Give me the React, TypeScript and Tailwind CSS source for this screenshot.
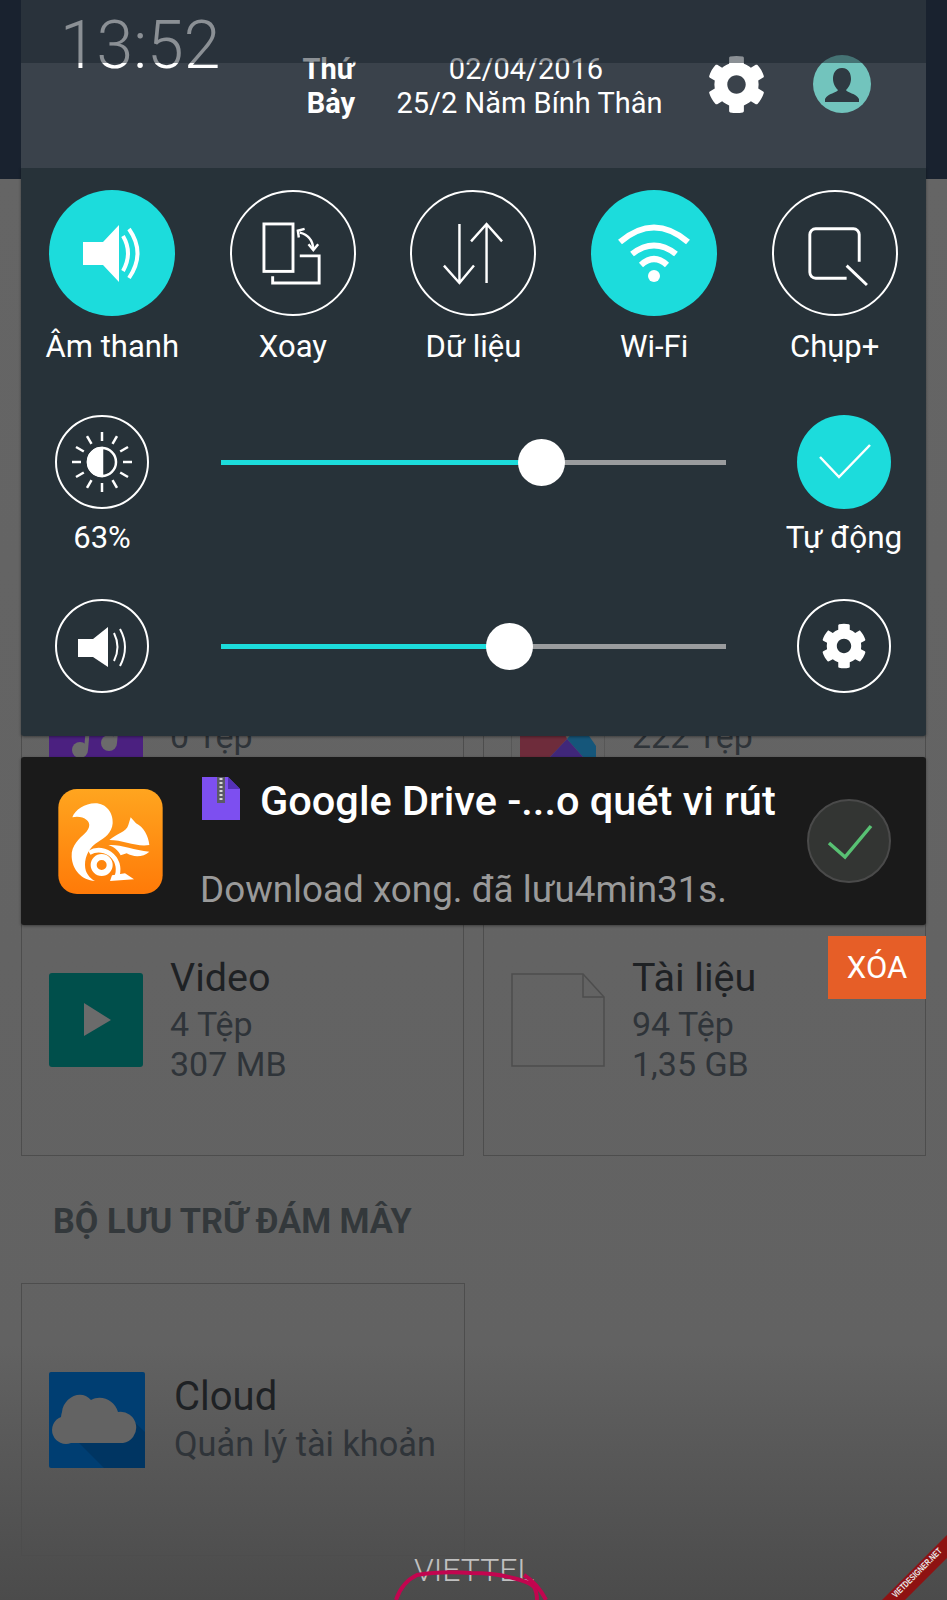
import { FaCog } from "react-icons/fa";

const font = { fontFamily: "Roboto, sans-serif" };

const Speaker = () => (
  <svg viewBox="0 0 126 126" className="w-[126px] h-[126px]" fill="none">
    <polygon points="34,52 54,52 70,35 70,92 54,75 34,75" fill="#fff" />
    <path d="M74 46 Q84 63 74 81" stroke="#fff" strokeWidth="4" />
    <path d="M80 39 Q97 63 80 88" stroke="#fff" strokeWidth="4" />
  </svg>
);

const Rotate = () => (
  <svg viewBox="0 0 126 126" className="w-[122px] h-[122px]" fill="none" stroke="#fff" strokeWidth="3">
    <rect x="33" y="33" width="30" height="49" />
    <path d="M70 66 H90 V94 H42 V87" />
    <path d="M70 42 Q83 45 84 59" strokeWidth="2.5" />
    <path d="M69 47 L68 40 L75 38 M79 54 L84 60 L89 54" strokeWidth="2.5" />
  </svg>
);

const DataArrows = () => (
  <svg viewBox="0 0 126 126" className="w-[122px] h-[122px]" fill="none" stroke="#fff" strokeWidth="2.5">
    <path d="M49 33 V94 M33 76 L49 94 L64 76" />
    <path d="M77 94 V33 M61 51 L77 33 L93 51" />
  </svg>
);

const Wifi = () => (
  <svg viewBox="0 0 126 126" className="w-[126px] h-[126px]" fill="none" stroke="#fff" strokeWidth="6">
    <path d="M29 52 Q63 23 97 52" />
    <path d="M41 64 Q63 47 85 64" />
    <path d="M50 75 Q63 63 76 75" />
    <ellipse cx="63" cy="86" rx="6" ry="6" fill="#fff" stroke="none" />
  </svg>
);

const Capture = () => (
  <svg viewBox="0 0 126 126" className="w-[122px] h-[122px]" fill="none" stroke="#fff" strokeWidth="3">
    <path d="M75 89 H43 a6 6 0 0 1 -6 -6 V44 a6 6 0 0 1 6 -6 H82 a6 6 0 0 1 6 6 V72" />
    <path d="M75 76 L96 96" />
  </svg>
);

const Brightness = () => {
  const rays = [0, 30, 60, 90, 120, 150, 180, 210, 240, 270, 300, 330];
  return (
    <svg viewBox="0 0 94 94" className="w-[94px] h-[94px] shrink-0" fill="none" stroke="#fff" strokeWidth="2.5">
      {rays.map((r) => (
        <line key={r} x1="47" y1="17" x2="47" y2="26" transform={`rotate(${r} 47 47)`} />
      ))}
      <circle cx="47" cy="47" r="14" />
      <path d="M47 33 A14 14 0 0 0 47 61 Z" fill="#fff" />
    </svg>
  );
};

const VolumeIcon = () => (
  <svg viewBox="0 0 94 94" className="w-[94px] h-[94px] shrink-0" fill="none" stroke="#fff" strokeWidth="2">
    <polygon points="23,40 38,40 53,28 53,68 38,58 23,58" fill="#fff" stroke="none" />
    <path d="M59 34 Q66 48 59 62" />
    <path d="M65 30 Q75 48 65 67" />
  </svg>
);

const Check = () => (
  <svg viewBox="0 0 94 94" className="w-[94px] h-[94px]" fill="none" stroke="#fff" strokeWidth="2.5">
    <path d="M23 42 L42 62 L73 30" />
  </svg>
);

const UcLogo = () => (
  <svg viewBox="85 57 313 315" className="w-[105px] h-[105px]">
    <defs>
      <linearGradient id="uc" x1="0" y1="0" x2="0" y2="1">
        <stop offset="0" stopColor="#ffa51f" />
        <stop offset="1" stopColor="#ff7a08" />
      </linearGradient>
    </defs>
    <rect x="85" y="57" width="313" height="315" rx="56" fill="url(#uc)" />
    <path
      d="M127 142 C135 120 165 100 195 100 C230 100 250 130 248 160 C246 190 222 205 205 215 C180 230 165 255 165 285 C165 310 180 325 195 333 C155 330 127 300 125 260 C123 225 150 205 165 190 C180 175 182 160 170 150 C160 142 145 138 127 142 Z"
      fill="#fff"
    />
    <circle cx="215" cy="285" r="24" fill="none" stroke="#fff" strokeWidth="18" />
    <path d="M178 248 A58 58 0 0 1 258 325" fill="none" stroke="#fff" strokeWidth="14" />
    <path d="M246 316 L285 310 L312 328 L240 333 Z" fill="#fff" />
    <path d="M238 210 C262 190 290 185 295 165 L302 142 L318 160 C342 172 355 198 358 225 C320 232 280 210 238 210 Z" fill="#fff" />
    <path d="M235 225 C270 222 310 240 358 245 C340 262 310 262 290 250 L272 256 C265 240 250 230 235 225 Z" fill="#fff" />
  </svg>
);

const ZipIcon = () => (
  <svg viewBox="0 0 38 43" className="w-[38px] h-[43px] shrink-0">
    <path d="M0 0 H26 L38 12 V43 H0 Z" fill="#7d4ff0" />
    <path d="M26 0 L38 12 H26 Z" fill="#5531b8" />
    <rect x="15" y="0" width="8" height="26" fill="#5b5a66" />
    <path d="M19 1 V24" stroke="#d8d8d8" strokeWidth="3" strokeDasharray="2 2" />
  </svg>
);

const Toggle = ({ label, active, children }: { label: string; active?: boolean; children: React.ReactNode }) => (
  <div className="flex flex-col items-center">
    <div
      className={
        active
          ? "w-[126px] h-[126px] rounded-full bg-[#1cdcdc] flex items-center justify-center"
          : "w-[126px] h-[126px] rounded-full border-2 border-white flex items-center justify-center"
      }
    >
      {children}
    </div>
    <p className="mt-[13px] text-[31px] leading-[36px] text-white">{label}</p>
  </div>
);

const Slider = ({ fill }: { fill: string }) => (
  <div className="relative h-[94px] ml-[38px] mr-[36px] flex items-center">
    <div className="w-full h-[5px] bg-[#9a9c9e] flex">
      <div className={`${fill} h-full bg-[#1cdcdc]`} />
    </div>
  </div>
);

const Thumb = ({ left }: { left: string }) => (
  <div className={`absolute top-[24px] ${left} w-[47px] h-[47px] rounded-full bg-white`} />
);

const FileCard = ({ icon, title, line1, line2 }: { icon: React.ReactNode; title?: string; line1: string; line2?: string }) => (
  <div className="h-[273px] border border-[#4d4d4d] flex items-center pl-[27px]">
    <div className="w-[94px] shrink-0 self-center">{icon}</div>
    <div className="ml-[27px]">
      <p className="h-[44px] mb-[4px] text-[39.5px] leading-[44px] text-[#1e2124]">{title}</p>
      <p className="h-[40px] text-[34px] leading-[40px] text-[#2f3439]">{line1}</p>
      <p className="h-[40px] text-[34px] leading-[40px] text-[#2f3439]">{line2}</p>
    </div>
  </div>
);

export default function App() {
  return (
    <div className="relative w-[947px] h-[1600px] overflow-hidden bg-[#656565]" style={font}>
      {/* page behind the notification shade */}
      <div className="h-[179px] bg-[#19222f]" />
      <div className="h-[1421px] bg-gradient-to-b from-[#656565] via-[#626262] via-[82%] to-[#4b4b4b] px-[21px] pt-[416px]">
        <div className="grid grid-cols-2 gap-x-[19px] gap-y-[15px]">
          <FileCard
            line1="0 Tệp"
            icon={
              <svg viewBox="0 0 94 94" className="w-[94px] h-[94px]">
                <rect width="94" height="94" rx="2" fill="#4b2080" />
                <circle cx="31" cy="65" r="8" fill="#6b6b6b" />
                <circle cx="60" cy="58" r="8" fill="#6b6b6b" />
                <path d="M37 65 L39 42 M66 58 L68 35" stroke="#6b6b6b" strokeWidth="4" />
              </svg>
            }
          />
          <FileCard
            line1="222 Tệp"
            icon={
              <svg viewBox="0 0 94 94" className="w-[94px] h-[94px]">
                <rect x="0.5" y="0.5" width="93" height="93" fill="none" stroke="#575757" />
                <polygon points="9,40 50,40 56,54 39,72 9,72" fill="#6e2c3b" />
                <polygon points="56,54 64,45 74,45 85,61 85,94 72,72" fill="#15567a" />
                <polygon points="56,54 72,72 39,72" fill="#40277a" />
              </svg>
            }
          />
          <FileCard
            title="Video"
            line1="4 Tệp"
            line2="307 MB"
            icon={
              <svg viewBox="0 0 94 94" className="w-[94px] h-[94px]">
                <rect width="94" height="94" rx="3" fill="#004f4b" />
                <polygon points="35,30 62,47 35,63" fill="#6b6b6b" />
              </svg>
            }
          />
          <FileCard
            title="Tài liệu"
            line1="94 Tệp"
            line2="1,35 GB"
            icon={
              <svg viewBox="0 0 94 94" className="w-[94px] h-[94px]" fill="none" stroke="#4d4d4d" strokeWidth="1.5">
                <path d="M1 1 H72 L93 24 V93 H1 Z" />
                <path d="M72 1 V24 H93" />
              </svg>
            }
          />
        </div>
        <h2 className="mt-[45px] ml-[32px] text-[34.2px] leading-[40px] font-bold text-[#33383b]">BỘ LƯU TRỮ ĐÁM MÂY</h2>
        <div className="mt-[42px] w-[444px] h-[273px] border border-[#4d4d4d] flex items-center pl-[27px]">
          <svg viewBox="0 0 96 96" className="w-[96px] h-[96px] shrink-0">
            <rect width="96" height="96" rx="2" fill="#003e72" />
            <path d="M30 71 L55 96 H96 V60 L80 45 Z" fill="#003562" />
            <path d="M22 71 A13 13 0 0 1 12 45 A18 18 0 0 1 13 40 C14 26 32 16 42 28 C52 22 66 28 69 40 A15 15 0 0 1 74 71 Z" fill="#636363" />
          </svg>
          <div className="ml-[29px] mt-[3px]">
            <p className="text-[40px] leading-[46px] text-[#1e2124]">Cloud</p>
            <p className="text-[34.3px] leading-[48px] text-[#2f3439]">Quản lý tài khoản</p>
          </div>
        </div>
      </div>

      <p className="absolute left-[414px] top-[1550px] text-[32px] leading-[40px] font-light text-[#c0c0c0]">VIETTEL</p>
      <svg viewBox="0 0 947 100" className="absolute left-0 top-[1500px] w-[947px] h-[100px]" fill="none" stroke="#c2054f" strokeWidth="4">
        <path d="M396 100 Q402 82 417 75 Q440 71 471 73 Q495 73 513 78 Q530 82 534 87 Q537 92 537 100" />
        <path d="M524 75 Q538 84 546 100" />
      </svg>

      {/* watermark ribbon */}
      <svg viewBox="847 1500 100 100" className="absolute right-0 bottom-0 w-[100px] h-[100px]">
        <polygon points="882,1600 947,1535 947,1558 905,1600" fill="#8e1212" />
        <text
          x="919"
          y="1575"
          transform="rotate(-45 919 1575)"
          textAnchor="middle"
          textLength="66"
          lengthAdjust="spacingAndGlyphs"
          fontSize="9"
          fontWeight="700"
          fill="#e8e8e8"
          fontFamily="Liberation Sans, sans-serif"
        >
          VIETDESIGNER.NET
        </text>
      </svg>

      {/* notification shade */}
      <div className="absolute left-[21px] top-0 w-[905px] flex flex-col">
        <div className="relative h-[168px] bg-[#3a424b] flex items-start">
          <p className="ml-[39px] mt-[11px] text-[66px] leading-[70px] font-light text-white w-[242px]">13:52</p>
          <div className="mt-[52px] text-[29px] leading-[34px] font-bold text-white w-[55px]">
            <p className="text-center -ml-[2px]">Thứ</p>
            <p className="text-center ml-[3px]">Bảy</p>
          </div>
          <div className="mt-[52px] ml-[39px] text-[29px] leading-[34px] text-white text-center w-[267px]">
            <p className="mr-[7px]">02/04/2016</p>
            <p>25/2 Năm Bính Thân</p>
          </div>
          <FaCog className="ml-[44px] mt-[55px] w-[59px] h-[59px] text-white" />
          <div className="ml-[47px] mt-[55px] w-[58px] h-[58px] rounded-full bg-[#72c4bd] flex items-center justify-center">
            <svg viewBox="0 0 58 58" className="w-[58px] h-[58px]">
              <path d="M29 13 C36 13 38 19 38 24 C38 29 35 33 33 35 C34 38 43 38 46 44 V47 H12 V44 C15 38 24 38 25 35 C23 33 20 29 20 24 C20 19 22 13 29 13 Z" fill="#2f3a42" />
            </svg>
          </div>
          <div className="absolute inset-x-0 top-0 h-[63px] bg-[#17212b]/50" />
        </div>

        <div className="bg-[#273239] rounded-b-[3px] pt-[22px] h-[568px] shadow-[0_1px_3px_rgba(0,0,0,0.4)]">
          <div className="grid grid-cols-5 px-px h-[225px]">
            <Toggle label="Âm thanh" active><Speaker /></Toggle>
            <Toggle label="Xoay"><Rotate /></Toggle>
            <Toggle label="Dữ liệu"><DataArrows /></Toggle>
            <Toggle label="Wi-Fi" active><Wifi /></Toggle>
            <Toggle label="Chụp+"><Capture /></Toggle>
          </div>

          <div className="grid grid-cols-[162px_1fr_164px] h-[184px]">
            <div className="flex flex-col items-center">
              <div className="w-[94px] h-[94px] rounded-full border-2 border-white flex items-center justify-center"><Brightness /></div>
              <p className="mt-[12px] text-[31px] leading-[34px] text-white">63%</p>
            </div>
            <div className="relative">
              <Slider fill="w-[320px]" />
              <Thumb left="left-[335px]" />
            </div>
            <div className="flex flex-col items-center">
              <div className="w-[94px] h-[94px] rounded-full bg-[#1cdcdc]"><Check /></div>
              <p className="mt-[12px] text-[31.5px] leading-[34px] text-white whitespace-nowrap">Tự động</p>
            </div>
          </div>

          <div className="grid grid-cols-[162px_1fr_164px]">
            <div className="flex justify-center">
              <div className="w-[94px] h-[94px] rounded-full border-2 border-white flex items-center justify-center"><VolumeIcon /></div>
            </div>
            <div className="relative">
              <Slider fill="w-[289px]" />
              <Thumb left="left-[303px]" />
            </div>
            <div className="flex justify-center">
              <div className="w-[94px] h-[94px] rounded-full border-2 border-white flex items-center justify-center">
                <FaCog className="w-[46px] h-[46px] text-white" />
              </div>
            </div>
          </div>
        </div>

        <div className="mt-[21px] h-[168px] bg-[#1a1a1a] rounded-[3px] flex items-center shadow-[0_1px_3px_rgba(0,0,0,0.4)]">
          <div className="ml-[37px] shrink-0"><UcLogo /></div>
          <div className="ml-[39px] flex-1 self-start pt-[20px]">
            <div className="flex items-start">
              <ZipIcon />
              <p className="ml-[20px] mt-[1px] text-[41.5px] leading-[46px] font-medium text-white whitespace-nowrap">Google Drive -...o quét vi rút</p>
            </div>
            <p className="mt-[44px] -ml-[2px] text-[36.8px] leading-[44px] text-[#9a9a9a] whitespace-nowrap">Download xong. đã lưu4min31s.</p>
          </div>
          <div className="mr-[35px] w-[84px] h-[84px] rounded-full bg-[#333533] border-2 border-[#4a4a4a] flex items-center justify-center shrink-0">
            <svg viewBox="0 0 84 84" className="w-[84px] h-[84px] shrink-0" fill="none" stroke="#58c173" strokeWidth="3.5">
              <path d="M22 44 L38 58 L64 27" />
            </svg>
          </div>
        </div>

        <div className="mt-[11px] self-end w-[98px] h-[63px] bg-[#e65e27] flex items-center justify-center">
          <p className="text-[31px] leading-[36px] text-white">XÓA</p>
        </div>
      </div>
    </div>
  );
}
